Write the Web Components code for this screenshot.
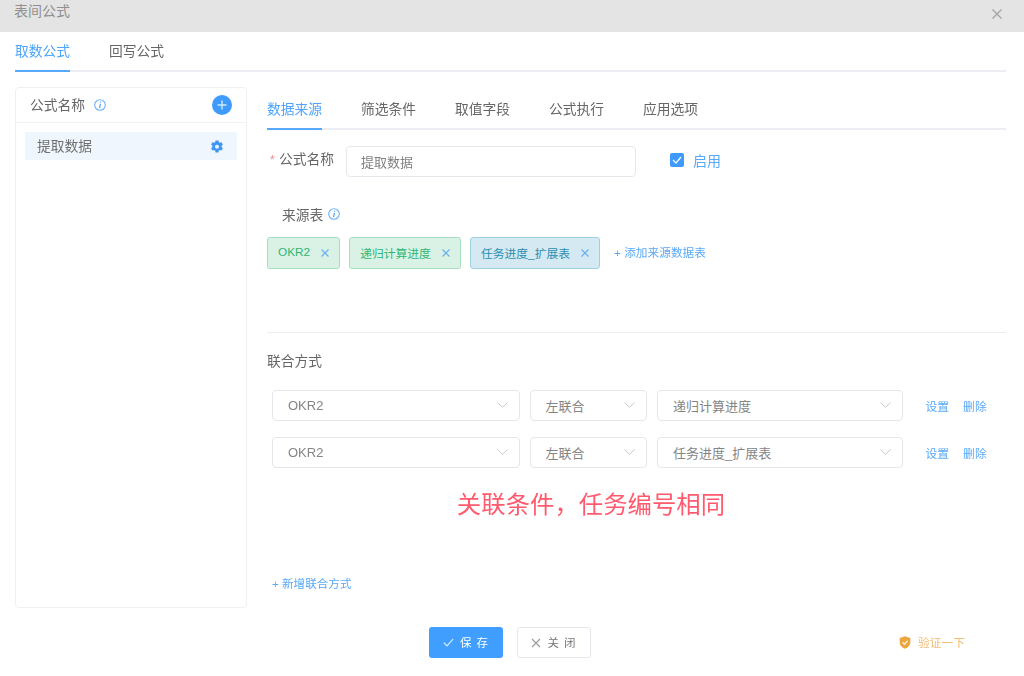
<!DOCTYPE html>
<html lang="zh">
<head>
<meta charset="utf-8">
<title>表间公式</title>
<style>
html,body{margin:0;padding:0;background:#fff;}
body{width:1024px;height:676px;overflow:hidden;font-family:"Liberation Sans","Noto Sans CJK SC",sans-serif;color:#666;font-size:14px;}
x-dialog{filter:blur(.4px);}
</style>
</head>
<body>
<x-dialog>
  <x-tabs slot="tabs" items="取数公式,回写公式" active="0" gap="39"></x-tabs>
  <x-formula-list slot="aside"></x-formula-list>
  <x-source-panel slot="main"></x-source-panel>
  <x-footer slot="footer"></x-footer>
</x-dialog>
<script>
const ICONS={
  x:c=>`<svg width="8" height="8" viewBox="0 0 8 8" fill="none" stroke="${c}" stroke-width="1.200"><path d="M.5.5l7 7M7.500.5l-7 7"/></svg>`,
  info:`<svg width="12" height="12" viewBox="0 0 12 12" fill="none"><circle cx="6" cy="6" r="5.300" stroke="#6fb2f6" stroke-width="1.100"/><path d="M6.600 2.800v1M6.400 5l-.8 4.200" stroke="#4fa2f6" stroke-width="1.200"/></svg>`,
  chev:`<svg width="11" height="6" viewBox="0 0 11 6" fill="none" stroke="#c6c9cf" stroke-width="1"><path d="M.5.500L5.500 5.300 10.500.500"/></svg>`
};
function def(name,css,html,setup){
  customElements.define(name,class extends HTMLElement{
    constructor(){super();this.attachShadow({mode:'open'});}
    connectedCallback(){
      const h=typeof html==='function'?html(this):html;
      this.shadowRoot.innerHTML=`<style>${css}</style>${h}`;
      if(setup)setup(this);
    }
  });
}
def('x-dialog',`
:host{display:block;width:1024px;height:676px;}
.head{height:32px;background:#e4e4e4;display:flex;justify-content:space-between;box-sizing:border-box;padding:2px 21px 0 14px;color:#8f8f8f;font-size:14px;line-height:18px;}
.close{margin-top:4px;height:12px;}
.tabs{padding:0 18px 0 15px;height:40px;}
.body{display:flex;margin:15px 18px 0 15px;gap:20px;height:521px;}
.main{flex:1;min-width:0;}
`,`
<div class="head"><span>表间公式</span><span class="close"><svg width="12" height="12" viewBox="0 0 12 12" fill="none" stroke="#a2a2a2" stroke-width="1.200"><path d="M1.500 1.500l9 9M10.500 1.500l-9 9"/></svg></span></div>
<div class="tabs"><slot name="tabs"></slot></div>
<div class="body"><slot name="aside"></slot><div class="main"><slot name="main"></slot></div></div>
<slot name="footer"></slot>
`);
def('x-tabs',`
:host{display:block;}
.bar{display:flex;height:40px;box-sizing:border-box;border-bottom:2px solid #ededf3;}
.t{height:40px;line-height:40px;font-size:13.750px;color:#666;box-sizing:border-box;white-space:nowrap;}
.t.a{color:#4ea5fb;border-bottom:2px solid #56a9fb;}
`,el=>{
  const items=el.getAttribute('items').split(','),act=+el.getAttribute('active'),gap=el.getAttribute('gap');
  return `<div class="bar" style="gap:${gap}px">`+items.map((s,i)=>`<div class="t${i==act?' a':''}">${s}</div>`).join('')+`</div>`;
});
def('x-info',`:host{display:inline-flex;}`,ICONS.info);
def('x-formula-list',`
:host{display:block;width:232px;box-sizing:border-box;border:1px solid #f0f0f4;border-radius:4px;height:521px;}
.h{height:35px;box-sizing:border-box;border-bottom:1px solid #f2f2f5;display:flex;align-items:center;padding:0 14px 0 14px;color:#666;font-size:13.750px;}
.h span{margin-top:-2px;}
.h x-info{margin-left:9px;}
.plus{margin-left:auto;width:20px;height:20px;margin-top:-1px;}
.item{margin:9px 9px 0;height:28px;background:#eff6fd;display:flex;align-items:center;justify-content:space-between;padding:0 13px 0 12px;font-size:13.750px;color:#707070;}
.item>span:first-child{margin-top:-2px;}
.gear{display:flex;margin-top:2px;}
`,`
<div class="h"><span>公式名称</span><x-info></x-info>
<svg class="plus" viewBox="0 0 20 20"><circle cx="10" cy="10" r="10" fill="#3f9bfb"/><path d="M10 5.500v9M5.500 10h9" stroke="#cfe6fd" stroke-width="1.400"/></svg></div>
<div class="item"><span>提取数据</span><span class="gear"><svg width="14" height="14" viewBox="0 0 14 14"><path fill="#3f96f3" fill-rule="evenodd" d="M5.600.4h2.800l.4 1.700 1 .6 1.700-.5 1.400 2.400-1.300 1.200v1.200l1.300 1.200-1.400 2.400-1.700-.5-1 .6-.4 1.700H5.600l-.4-1.700-1-.6-1.700.5L1.100 8.200l1.300-1.200V5.800L1.100 4.600l1.400-2.400 1.700.5 1-.6zM7 4.700a2 2 0 1 0 0 4 2 2 0 0 0 0-4z"/></svg></span></div>
`);
def('x-tag',`
:host{display:inline-flex;align-items:center;height:32px;box-sizing:border-box;border:1px solid var(--b);background:var(--bg);color:var(--c);border-radius:3px;padding:0 10px;font-size:11.800px;gap:11px;white-space:nowrap;}
span{margin-top:-2px;}
svg{display:block;}
`,`<span><slot></slot></span>${ICONS.x('#6cb0ee')}`);
def('x-select',`
:host{display:flex;align-items:center;justify-content:space-between;height:31px;box-sizing:border-box;border:1px solid #e4e6ec;border-radius:4px;padding:0 11px 0 15px;font-size:13px;color:#858585;background:#fff;white-space:nowrap;}
svg{display:block;margin-top:-1px;}
`,`<slot></slot>${ICONS.chev}`);
def('x-join-row',`
:host{display:flex;align-items:center;height:31px;margin-left:5px;}
x-select:nth-of-type(1){width:247.500px;}
x-select:nth-of-type(2){width:117.500px;margin-left:10px;}
x-select:nth-of-type(3){width:245.500px;margin-left:10px;}
a{font-size:11.800px;color:#58a9f8;margin-left:14px;white-space:nowrap;}
a.f{margin-left:23px;}
`,el=>`<x-select>${el.getAttribute('a')}</x-select><x-select>左联合</x-select><x-select>${el.getAttribute('b')}</x-select><a class="f">设置</a><a>删除</a>`);
def('x-source-panel',`
:host{display:block;padding-top:3px;}
.form{display:flex;align-items:flex-start;margin-top:16px;height:31px;}
.star{color:#f58a8a;font-size:12px;margin-left:3px;width:9px;line-height:28px;}
.lab{font-size:13.750px;color:#666;line-height:28px;width:67px;}
.inp{width:290px;height:31px;box-sizing:border-box;border:1px solid #e6e7ec;border-radius:4px;padding:0 14px;font-size:13px;line-height:31px;color:#808080;}
.chk{display:flex;align-items:center;margin-left:34px;height:28px;color:#58a9f8;font-size:14px;gap:9px;}
.box{width:14px;height:14px;background:#3f9bfb;border-radius:2px;display:flex;align-items:center;justify-content:center;}
.src{display:flex;align-items:center;margin:27px 0 0 15px;height:20px;font-size:13.750px;gap:5px;color:#666;}
.tags{display:flex;align-items:center;gap:9px;margin-top:13px;}
.add{font-size:11.700px;color:#58a9f8;margin:-3px 0 0 5px;white-space:nowrap;}
.div{height:1px;background:#ededf1;margin-top:63px;}
.ttl{font-size:13.750px;margin-top:19px;line-height:20px;color:#666;}
.rows{display:flex;flex-direction:column;gap:16px;margin-top:18px;}
.note{font-size:24.400px;color:#ff5a6e;text-align:center;line-height:36px;margin-top:19px;width:648px;}
.new{font-size:11.600px;color:#58a9f8;margin:53px 0 0 5px;line-height:16px;}
`,`
<x-tabs items="数据来源,筛选条件,取值字段,公式执行,应用选项" active="0" gap="39"></x-tabs>
<div class="form"><span class="star">*</span><span class="lab">公式名称</span><div class="inp">提取数据</div>
<div class="chk"><span class="box"><svg width="10" height="8" viewBox="0 0 10 8" fill="none" stroke="#fff" stroke-width="1.200"><path d="M1 4l3 3 5-6"/></svg></span>启用</div></div>
<div class="src"><span>来源表</span><x-info></x-info></div>
<div class="tags">
<x-tag style="--b:#a5e0c0;--bg:#daf2e6;--c:#2eb672">OKR2</x-tag>
<x-tag style="--b:#a5e0c0;--bg:#daf2e6;--c:#2eb672">递归计算进度</x-tag>
<x-tag style="--b:#9ed0e4;--bg:#d5e9f3;--c:#2a8fb0">任务进度_扩展表</x-tag>
<span class="add">+ 添加来源数据表</span>
</div>
<div class="div"></div>
<div class="ttl">联合方式</div>
<div class="rows">
<x-join-row a="OKR2" b="递归计算进度"></x-join-row>
<x-join-row a="OKR2" b="任务进度_扩展表"></x-join-row>
</div>
<div class="note">关联条件，任务编号相同</div>
<div class="new">+ 新增联合方式</div>
`);
def('x-button',`
:host{display:inline-flex;align-items:center;justify-content:center;gap:6px;width:74px;height:31px;box-sizing:border-box;border-radius:3px;font-size:11.500px;letter-spacing:1px;white-space:nowrap;}
:host([primary]){background:#409eff;color:#fff;}
:host(:not([primary])){border:1px solid #e6e7ec;color:#777;background:#fff;}
span{margin-top:-2px;}
svg{display:block;}
`,`<slot name="i"></slot><span><slot></slot></span>`);
def('x-footer',`
:host{display:grid;grid-template-columns:429px auto 1fr;margin-top:19px;height:31px;align-items:center;}
.btns{grid-column:2;display:flex;gap:14px;}
.v{display:flex;align-items:center;justify-content:flex-end;gap:7px;padding-right:59px;color:#f2bd74;font-size:11.750px;}
.v span{margin-top:-2px;}
svg{display:block;}
`,`
<div class="btns">
<x-button primary><svg slot="i" width="11" height="9" viewBox="0 0 11 9" fill="none" stroke="#e4f1ff" stroke-width="1.100"><path d="M.8 4.600l3.200 3.300L10.200 1"/></svg>保 存</x-button>
<x-button><svg slot="i" width="10" height="10" viewBox="0 0 10 10" fill="none" stroke="#999" stroke-width="1.100"><path d="M1 1l8 8M9 1L1 9"/></svg>关 闭</x-button>
</div>
<div class="v"><svg width="12" height="13" viewBox="0 0 12 13"><path fill="#eda63f" d="M6 .3l5.300 1.600v4.300c0 3.200-2.200 5.400-5.300 6.500C2.900 11.600.7 9.400.7 6.200V1.900z"/><path d="M3.500 6.300l1.900 1.900 3.200-3.400" fill="none" stroke="#fff" stroke-width="1.100"/></svg><span>验证一下</span></div>
`);
</script>
</body>
</html>
